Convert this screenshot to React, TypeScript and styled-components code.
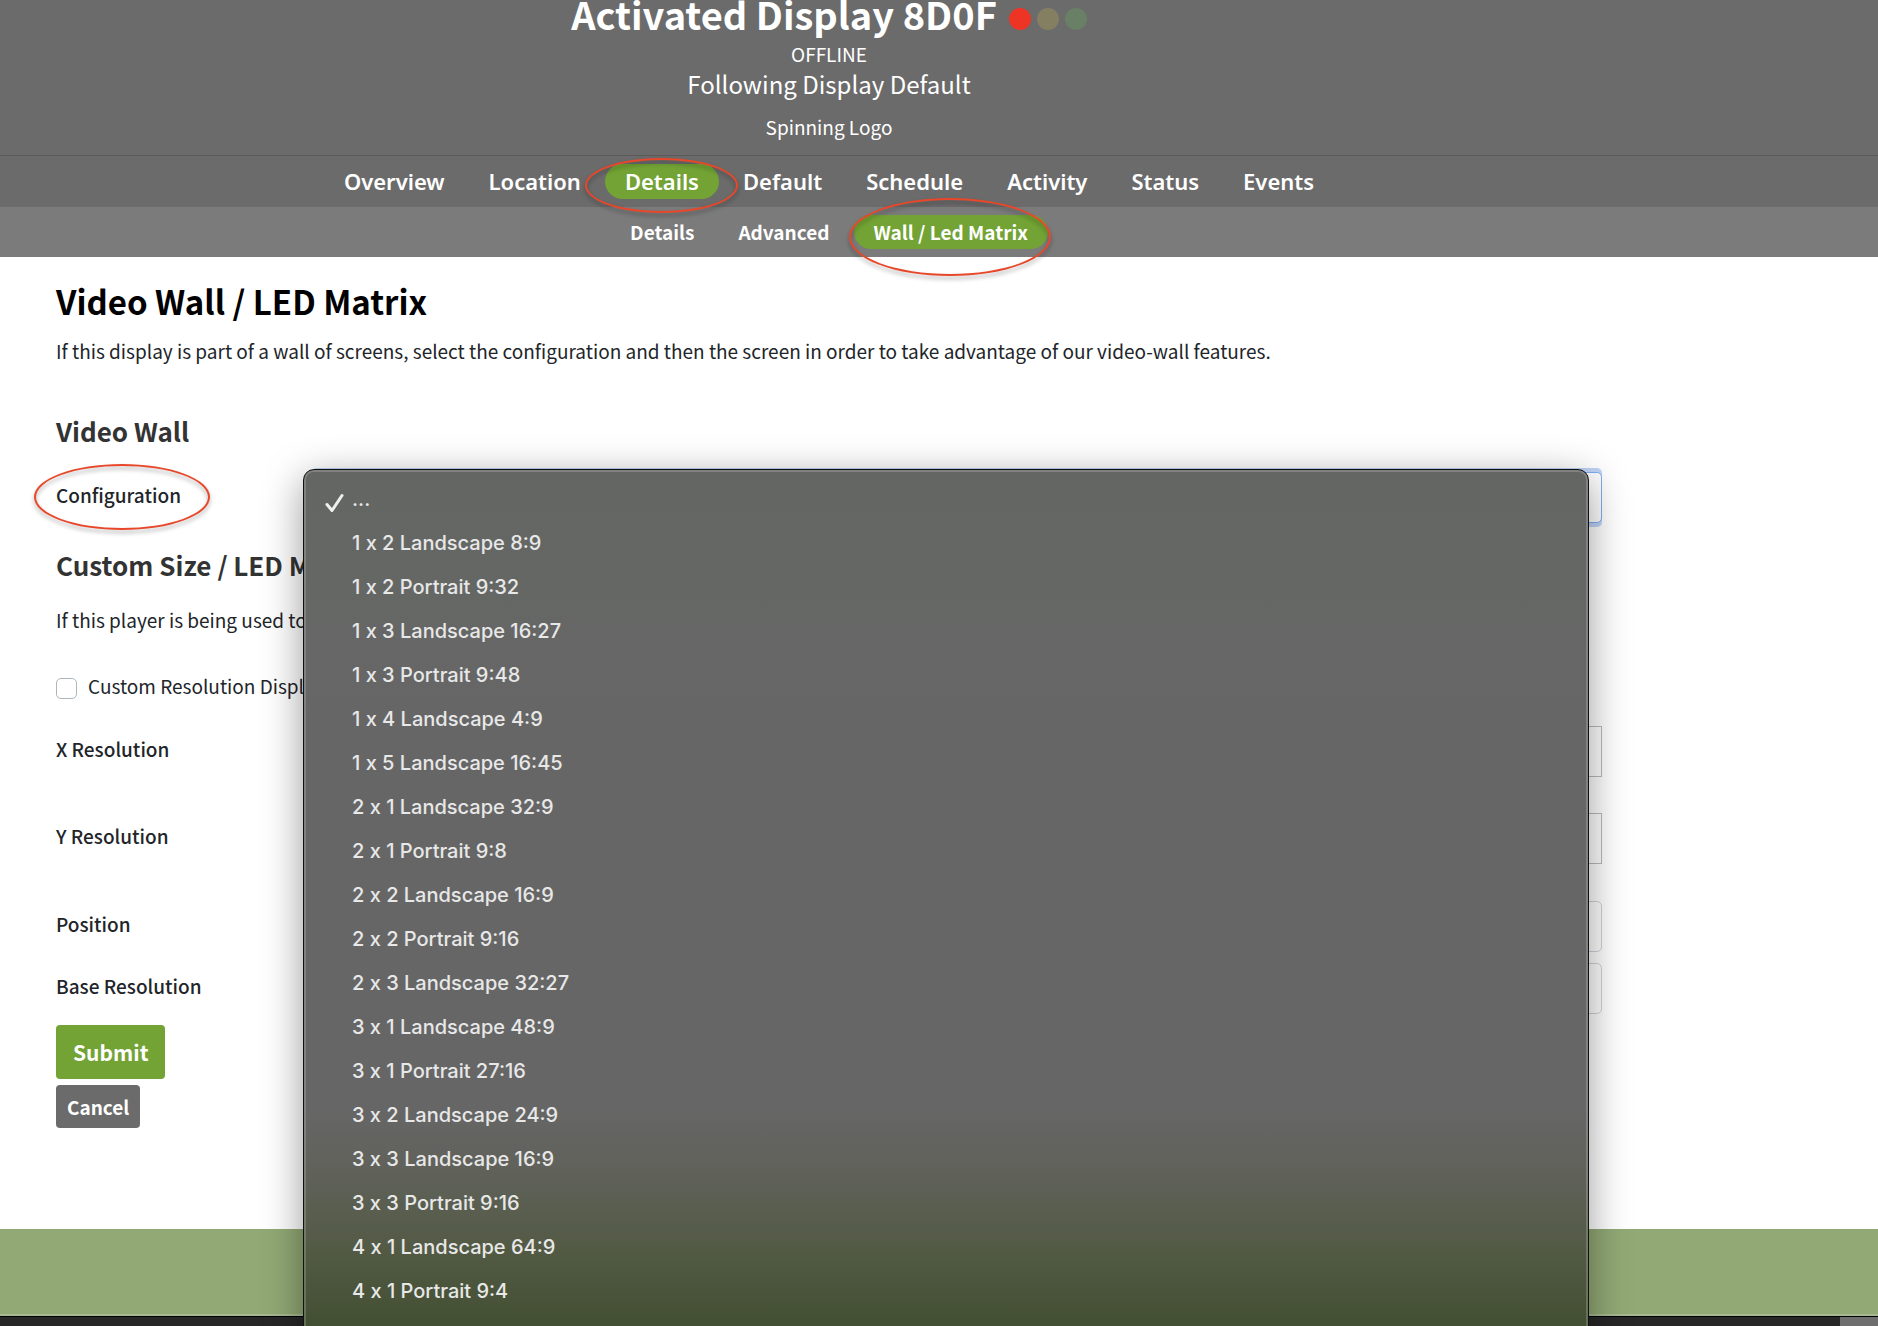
import React from "react";
import styled, { createGlobalStyle } from "styled-components";

const GlobalStyle = createGlobalStyle`
  *, *::before, *::after { box-sizing: border-box; }
  body {
    margin: 0;
    background: #fff;
    color: #212529;
    font: 400 19px/28px "Noto Sans CJK SC", "Noto Sans CJK JP", sans-serif;
  }
`;

const Page = styled.div`
  display: flex;
  flex-direction: column;
  height: 100vh;
  overflow: hidden;
`;

const Band = styled.div<{ $bg: string }>`
  flex: none;
  padding: 0 276px 0 56px;
  background: ${(p) => p.$bg};
  color: #fff;
`;

const Hero = styled(Band)`
  display: flex;
  flex-direction: column;
  align-items: center;
  padding-bottom: 14px;
  border-bottom: 1px solid #5a5a5a;
`;

const TitleRow = styled.div`
  display: flex;
  align-items: baseline;
  gap: 12px;
`;

const Title = styled.h1`
  margin: 0;
  font-size: 38px;
  line-height: 28px;
  font-weight: 700;
`;

const Lights = styled.div`
  display: flex;
  align-items: baseline;
  gap: 6px;
`;

const Light = styled.span<{ $color: string }>`
  width: 22px;
  height: 22px;
  border-radius: 50%;
  background: ${(p) => p.$color};
`;

const State = styled.p`
  margin: 10px 0 0;
`;

const Following = styled.p`
  margin: 0;
  font-size: 24px;
  line-height: 32px;
`;

const Playing = styled.p`
  margin: 13px 0 0;
`;

const NavBar = styled(Band)`
  display: flex;
  justify-content: center;
  align-items: center;
  gap: 4px;
`;

const MainNav = styled(NavBar)`
  height: 51px;
  font: 600 22px/35px "Noto Sans", "Open Sans", sans-serif;
`;

const SubNav = styled(NavBar)`
  height: 50px;
  font-weight: 700;
  line-height: 34px;
`;

const NavLink = styled.a<{ $active?: boolean }>`
  position: relative;
  padding: 0 20px;
  border-radius: 18px;
  color: #fff;
  text-decoration: none;
  white-space: nowrap;
  background: ${(p) => (p.$active ? "#72a334" : "transparent")};
`;

const Ring = styled.span<{ $inset: string }>`
  position: absolute;
  inset: ${(p) => p.$inset};
  z-index: 3;
  border: 2px solid #e8472a;
  border-radius: 50%;
  filter: drop-shadow(0 3px 2px rgba(0, 0, 0, 0.35));
  pointer-events: none;
`;

const Main = styled.main`
  flex: 1;
  min-height: 0;
  padding: 22px 276px 0 56px;
`;

const PageHeading = styled.h2`
  margin: 0;
  color: #000;
  font-size: 33px;
  line-height: 44px;
  font-weight: 700;
`;

const Intro = styled.p`
  margin: 14px 0 48px;
`;

const SectionHeading = styled.h3`
  margin: 0 0 23px;
  color: #333;
  font-size: 26px;
  line-height: 36px;
  font-weight: 700;
`;

const Note = styled.p`
  margin: 0 0 38px;
`;

const Row = styled.div<{ $after: number }>`
  display: grid;
  grid-template-columns: 256px 1fr;
  margin-bottom: ${(p) => p.$after}px;
`;

const LabelCell = styled.div`
  padding-top: 9px;
`;

const FieldLabel = styled.label`
  position: relative;
  display: inline-block;
  font-weight: 500;
`;

const Field = styled.div`
  position: relative;
`;

const Input = styled.input`
  display: block;
  width: 100%;
  height: 51px;
  padding: 0 12px;
  border: 1px solid #bbb;
  background: #fff;
  font: inherit;
`;

const Select = styled.select<{ $focused?: boolean }>`
  display: block;
  width: 100%;
  height: 51px;
  padding: 0 12px;
  appearance: none;
  border: 1px solid ${(p) => (p.$focused ? "#80aef2" : "#ced4da")};
  border-radius: 5px;
  background: #fff;
  box-shadow: ${(p) => (p.$focused ? "0 4px 0 #c0d4f7, 0 -4px 0 #c0d4f7" : "none")};
  font: inherit;
`;

const CheckLabel = styled.label`
  display: flex;
  align-items: center;
  gap: 11px;
  margin-bottom: 26px;
`;

const Check = styled.input`
  appearance: none;
  width: 21px;
  height: 21px;
  margin: 4px 0 0;
  border: 1px solid #adb5bd;
  border-radius: 5px;
  background: #fff;
`;

const Menu = styled.ul`
  position: absolute;
  z-index: 2;
  top: -3px;
  left: -9px;
  right: 13px;
  margin: 0;
  padding: 7px 0 44px;
  list-style: none;
  border: 1px solid #111;
  border-radius: 11px;
  background: linear-gradient(
    #646664 0,
    #656765 120px,
    #666 240px,
    #666 640px,
    #5f6158 710px,
    #525a44 780px,
    #445034 850px
  );
  box-shadow: inset 0 0 0 2px rgba(255, 255, 255, 0.18), 0 10px 40px rgba(0, 0, 0, 0.4);
  color: #e8e8e8;
  font: 500 20px/44px Inter, "Liberation Sans", sans-serif;
`;

const Option = styled.li`
  display: grid;
  grid-template-columns: 28px 1fr;
  height: 44px;
  padding-left: 20px;
`;

/* Keeps the plain letter x, which Inter would turn into a multiplication sign. */
const Grid = styled.span`
  font-feature-settings: "calt" 0;
`;

const Tick = styled.svg`
  width: 21px;
  height: 20px;
  margin-top: 16px;
`;

const Actions = styled.div`
  display: flex;
  flex-direction: column;
  align-items: flex-start;
  gap: 6px;
`;

const Button = styled.button<{ $primary?: boolean }>`
  height: ${(p) => (p.$primary ? 54 : 43)}px;
  padding: 0 ${(p) => (p.$primary ? 17 : 11)}px;
  border: 0;
  border-radius: 4px;
  background: ${(p) => (p.$primary ? "#72a334" : "#6b6b6b")};
  color: #fff;
  font-family: inherit;
  font-size: ${(p) => (p.$primary ? 21 : 19)}px;
  line-height: 28px;
  font-weight: 700;
`;

const Footer = styled.footer`
  flex: none;
  height: 87px;
  border-bottom: 2px solid #a6b990;
  background: #92a975;
`;

const Dock = styled.div`
  flex: none;
  display: flex;
  justify-content: flex-end;
  height: 10px;
  border-top: 1px solid #000;
  background: #272727;
`;

const DockEnd = styled.span`
  width: 38px;
  background: #6e6e6e;
`;

const mainLinks = ["Overview", "Location", "Details", "Default", "Schedule", "Activity", "Status", "Events"];
const subLinks = ["Details", "Advanced", "Wall / Led Matrix"];

const layouts = [
  ["1 x 2", "Landscape 8:9"],
  ["1 x 2", "Portrait 9:32"],
  ["1 x 3", "Landscape 16:27"],
  ["1 x 3", "Portrait 9:48"],
  ["1 x 4", "Landscape 4:9"],
  ["1 x 5", "Landscape 16:45"],
  ["2 x 1", "Landscape 32:9"],
  ["2 x 1", "Portrait 9:8"],
  ["2 x 2", "Landscape 16:9"],
  ["2 x 2", "Portrait 9:16"],
  ["2 x 3", "Landscape 32:27"],
  ["3 x 1", "Landscape 48:9"],
  ["3 x 1", "Portrait 27:16"],
  ["3 x 2", "Landscape 24:9"],
  ["3 x 3", "Landscape 16:9"],
  ["3 x 3", "Portrait 9:16"],
  ["4 x 1", "Landscape 64:9"],
  ["4 x 1", "Portrait 9:4"],
];

export default function App() {
  return (
    <>
      <GlobalStyle />
      <Page>
        <Hero as="header" $bg="#6b6b6b">
          <TitleRow>
            <Title>Activated Display 8D0F</Title>
            <Lights>
              <Light $color="#ee3424" />
              <Light $color="#857f61" />
              <Light $color="#6a8066" />
            </Lights>
          </TitleRow>
          <State>OFFLINE</State>
          <Following>Following Display Default</Following>
          <Playing>Spinning Logo</Playing>
        </Hero>
        <MainNav as="nav" $bg="#6b6b6b">
          {mainLinks.map((name) => (
            <NavLink key={name} href="#" $active={name === "Details"}>
              {name}
              {name === "Details" && <Ring $inset="-6px -19px -14px -20px" />}
            </NavLink>
          ))}
        </MainNav>
        <SubNav as="nav" $bg="#7b7b7b">
          {subLinks.map((name) => (
            <NavLink key={name} href="#" $active={name === "Wall / Led Matrix"}>
              {name}
              {name === "Wall / Led Matrix" && <Ring $inset="-17px -3px -27px -5px" />}
            </NavLink>
          ))}
        </SubNav>

        <Main>
          <PageHeading>Video Wall / LED Matrix</PageHeading>
          <Intro>
            If this display is part of a wall of screens, select the configuration and then the screen in order to take
            advantage of our video-wall features.
          </Intro>

          <SectionHeading>Video Wall</SectionHeading>
          <Row $after={24}>
            <LabelCell>
              <FieldLabel htmlFor="configuration">
                Configuration
                <Ring $inset="-17px -29px -21px -22px" />
              </FieldLabel>
            </LabelCell>
            <Field>
              <Select id="configuration" $focused defaultValue="">
                <option value="" />
              </Select>
              <Menu role="listbox" aria-label="Configuration">
                <Option role="option" aria-selected="true">
                  <Tick viewBox="0 0 21 20" fill="none" stroke="#f0f0f0" strokeWidth="3" strokeLinecap="round" strokeLinejoin="round">
                    <path d="M3 11.5 8 17.5 18 2.5" />
                  </Tick>
                  ...
                </Option>
                {layouts.map(([grid, shape]) => (
                  <Option key={grid + shape} role="option" aria-selected="false">
                    <span />
                    <span>
                      <Grid>{grid} </Grid>
                      {shape}
                    </span>
                  </Option>
                ))}
              </Menu>
            </Field>
          </Row>

          <SectionHeading>Custom Size / LED Matrix</SectionHeading>
          <Note>If this player is being used to</Note>
          <CheckLabel>
            <Check type="checkbox" />
            Custom Resolution Display
          </CheckLabel>

          <Row $after={36}>
            <LabelCell>
              <FieldLabel htmlFor="x-resolution">X Resolution</FieldLabel>
            </LabelCell>
            <Input id="x-resolution" />
          </Row>
          <Row $after={37}>
            <LabelCell>
              <FieldLabel htmlFor="y-resolution">Y Resolution</FieldLabel>
            </LabelCell>
            <Input id="y-resolution" />
          </Row>
          <Row $after={11}>
            <LabelCell>
              <FieldLabel htmlFor="position">Position</FieldLabel>
            </LabelCell>
            <Select id="position" />
          </Row>
          <Row $after={11}>
            <LabelCell>
              <FieldLabel htmlFor="base-resolution">Base Resolution</FieldLabel>
            </LabelCell>
            <Select id="base-resolution" />
          </Row>

          <Actions>
            <Button type="submit" $primary>
              Submit
            </Button>
            <Button type="button">Cancel</Button>
          </Actions>
        </Main>

        <Footer />
        <Dock>
          <DockEnd />
        </Dock>
      </Page>
    </>
  );
}
